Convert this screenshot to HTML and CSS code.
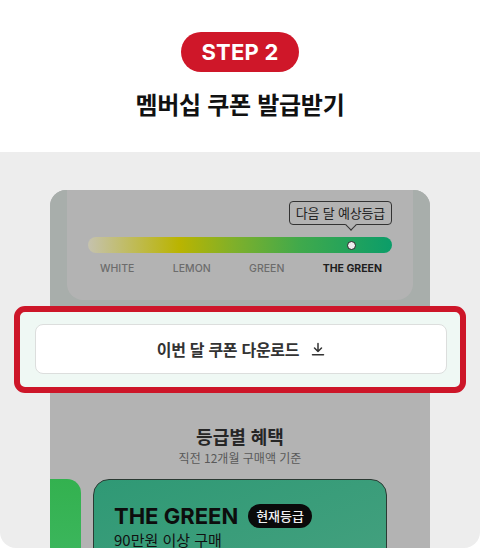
FILE: index.html
```html
<!DOCTYPE html>
<html lang="ko">
<head>
  <meta charset="UTF-8" />
  <meta name="viewport" content="width=device-width, initial-scale=1.0"/>
  <title>STEP 2 - 멤버십 쿠폰 발급받기</title>
  <link rel="stylesheet" href="styles.css">
</head>
<body>
  <div class="page">
    <div class="header">
      <div class="step">STEP 2</div>
      <h1>멤버십 쿠폰 발급받기</h1>
    </div>

    <div class="stage">
      <div class="phone">
        <div class="grade-area">
          <div class="grade-card">
            <div class="tip-row">
              <div class="tip">다음 달 예상등급</div>
            </div>
            <div class="bar">
              <span class="dot"></span>
            </div>
            <div class="labels">
              <span>WHITE</span>
              <span>LEMON</span>
              <span>GREEN</span>
              <span class="on">THE GREEN</span>
            </div>
          </div>
        </div>

        <div class="highlight">
          <button class="download">
            이번 달 쿠폰 다운로드
            <svg width="14" height="14" viewBox="0 0 14 14" fill="none" stroke="#333" stroke-width="1.5" stroke-linecap="round" stroke-linejoin="round">
              <path d="M7 1.5v8M3.5 6l3.5 3.5L10.5 6M1.5 12.8h11"/>
            </svg>
          </button>
        </div>

        <div class="benefits">
          <h3>등급별 혜택</h3>
          <p class="sub">직전 12개월 구매액 기준</p>
          <div class="cards">
            <div class="card-prev"></div>
            <div class="card-now">
              <div class="card-title">
                THE GREEN <span class="badge">현재등급</span>
              </div>
              <div class="card-desc">90만원 이상 구매</div>
            </div>
          </div>
        </div>
      </div>
    </div>
  </div>
</body>
</html>
```

FILE: styles.css
```css
* {
  box-sizing: border-box;
}

body {
  margin: 0;
  background: #fff;
  font-family: Inter, 'Noto Sans CJK KR', sans-serif;
}

.page {
  width: 480px;
  height: 548px;
  overflow: hidden;
  border-radius: 0 0 16px 16px;
  display: flex;
  flex-direction: column;
}

.header {
  flex-shrink: 0;
  height: 152px;
  background: #fff;
  display: flex;
  flex-direction: column;
  align-items: center;
  padding-top: 32px;
}

.step {
  width: 118px;
  height: 40px;
  border-radius: 20px;
  background: #cf1729;
  color: #fff;
  font-size: 22px;
  font-weight: 700;
  display: flex;
  align-items: center;
  justify-content: center;
  letter-spacing: 0.2px;
}

h1 {
  margin: 16px 0 0;
  font-family: 'Noto Sans CJK KR', sans-serif;
  font-size: 24px;
  font-weight: 700;
  color: #111;
  line-height: 32px;
  letter-spacing: -0.3px;
}

.stage {
  flex: 1;
  min-height: 0;
  background: #ededed;
  padding-top: 38px;
}

.phone {
  margin: 0 50px;
  height: 100%;
  background: #b3b3b3;
  border-radius: 16px 16px 0 0;
}

.grade-area {
  background: #a8aeab;
  border-radius: 16px 16px 0 0;
  padding: 0 17px 6px;
}

.grade-card {
  background: #b3b3b3;
  border-radius: 0 0 16px 16px;
  padding: 11px 21px 0;
  height: 110px;
}

.tip-row {
  display: flex;
  justify-content: flex-end;
}

.tip {
  position: relative;
  height: 24px;
  padding: 0 6px;
  border: 1.3px solid #333;
  border-radius: 4px;
  font-family: 'Noto Sans CJK KR', sans-serif;
  font-size: 13px;
  color: #222;
  line-height: 21px;
  letter-spacing: -0.2px;
}

.tip::after {
  content: '';
  position: absolute;
  left: 57px;
  bottom: -5px;
  width: 7px;
  height: 7px;
  background: #b3b3b3;
  border-right: 1.3px solid #333;
  border-bottom: 1.3px solid #333;
  transform: rotate(45deg);
}

.bar {
  position: relative;
  margin-top: 12px;
  height: 16px;
  border-radius: 8px;
  background: linear-gradient(90deg, #c5c2ae 0%, #bab400 30%, #7fb02a 48%, #3fa94c 70%, #0b9d69 100%);
}

.dot {
  position: absolute;
  left: 259px;
  top: 4px;
  width: 9px;
  height: 9px;
  border-radius: 50%;
  background: #eee;
  border: 1.5px solid #222;
}

.labels {
  display: flex;
  justify-content: space-between;
  padding: 0 10px 0 12px;
  margin-top: 9px;
  font-size: 10.5px;
  color: #6c6c6c;
  font-weight: 500;
}

.labels .on {
  color: #1e1e1e;
  font-weight: 700;
}

.highlight {
  margin: 0 -36px;
  height: 87px;
  border: 6px solid #cd1629;
  border-radius: 11px;
  background: #eff8f4;
  padding: 12px 13px 0 15px;
}

.download {
  width: 100%;
  height: 50px;
  background: #fff;
  border: 1.5px solid #dcdedd;
  border-radius: 8px;
  font-family: 'Noto Sans CJK KR', sans-serif;
  font-size: 16px;
  font-weight: 700;
  color: #333;
  display: flex;
  align-items: center;
  justify-content: center;
  gap: 12px;
  letter-spacing: -0.3px;
}

.benefits {
  padding-top: 30px;
  text-align: center;
}

.benefits h3 {
  margin: 0;
  font-family: 'Noto Sans CJK KR', sans-serif;
  font-size: 18px;
  font-weight: 700;
  color: #262626;
  line-height: 26px;
}

.sub {
  margin: 0;
  font-family: 'Noto Sans CJK KR', sans-serif;
  font-size: 12px;
  color: #595959;
  line-height: 18px;
}

.cards {
  display: flex;
  gap: 12px;
  margin-top: 12px;
  text-align: left;
}

.card-prev {
  width: 31px;
  height: 90px;
  background: linear-gradient(180deg, #33b14f, #3db75f);
  border-radius: 0 14px 0 0;
}

.card-now {
  width: 294px;
  height: 100px;
  border: 1px solid #2b3a33;
  border-radius: 16px;
  background: linear-gradient(160deg, #2f9975, #45a17f);
  padding: 22px 20px 0;
}

.card-title {
  display: flex;
  align-items: center;
  gap: 10px;
  font-size: 22px;
  font-weight: 700;
  color: #0d0d0d;
  line-height: 28px;
}

.badge {
  background: #0a0a0a;
  color: #f2f2f2;
  font-family: 'Noto Sans CJK KR', sans-serif;
  font-size: 13px;
  font-weight: 500;
  height: 24px;
  line-height: 23px;
  padding: 0 8px;
  border-radius: 12px;
}

.card-desc {
  font-family: 'Noto Sans CJK KR', sans-serif;
  font-size: 15px;
  line-height: 20px;
  color: #111;
}
```
